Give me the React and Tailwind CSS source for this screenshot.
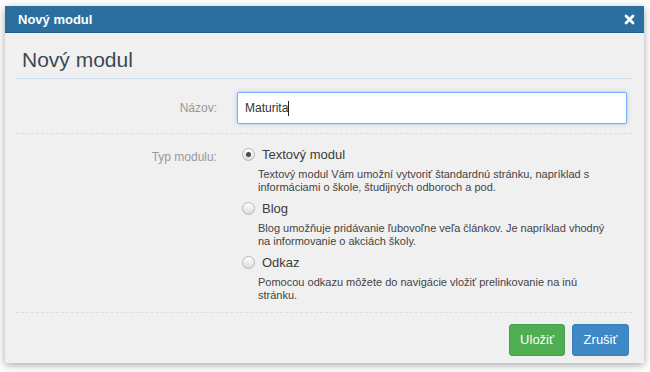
import React from "react";

function Radio({ checked }) {
  return (
    <div className="mt-[1.5px] w-[13px] h-[13px] shrink-0 rounded-full border border-[#b5b5b5] bg-[linear-gradient(#ffffff,#dcdcdc)] flex items-center justify-center">
      {checked && <div className="w-[5px] h-[5px] rounded-full bg-[#4a4a4a]" />}
    </div>
  );
}

function Option({ checked, label, desc }) {
  return (
    <div className="flex flex-col">
      <div className="flex items-start gap-[7px] h-[18px]">
        <Radio checked={checked} />
        <span className="text-[13px] leading-[18px] text-[#3c3c3c]">{label}</span>
      </div>
      <div className="mt-[4px] ml-[16px] w-[350px] text-[11px] leading-[13px] text-[#444]">{desc}</div>
    </div>
  );
}

export default function App() {
  return (
    <div
      className="w-[650px] h-[372px] bg-white pt-[6px] pl-[5px]"
      style={{ fontFamily: '"Liberation Sans", Arial, sans-serif' }}
    >
      <div className="w-[639px] h-[357px] bg-[#f0f0f0] shadow-[0_2px_8px_rgba(0,0,0,0.35)] flex flex-col">
        <div className="h-[27px] shrink-0 bg-[#2b6ea0] border-b border-[#1f5c8a] flex items-center justify-between pl-[13px] pr-[9px]">
          <span className="text-white font-bold text-[13px] leading-none">Nový modul</span>
          <svg width="11" height="11" viewBox="0 0 11 11">
            <path d="M2 2 L9 9 M9 2 L2 9" stroke="#fff" strokeWidth="2.8" strokeLinecap="round" />
          </svg>
        </div>
        <div className="mx-[11px] mr-[12px] flex flex-col">
          <div className="pt-[15px] pb-[6px] pl-[6px] border-b border-[#d0e0f2]">
            <h1 className="text-[21px] leading-[24px] text-[#3d4853]">Nový modul</h1>
          </div>
          <div className="pt-[13px] pb-[9px] flex items-center border-b border-dashed border-[#dcdcdc]">
            <div className="w-[201px] text-right text-[12px] text-[#999]">Názov:</div>
            <div className="ml-[20px] w-[390px] h-[32px] bg-white border border-[#77aef0] rounded-[2px] shadow-[0_0_4px_rgba(102,160,233,0.55)] flex items-center pl-[7px] text-[12px] text-[#333]">
              <span>Maturita</span>
              <span className="w-px h-[15px] bg-[#222]" />
            </div>
          </div>
          <div className="pt-[12px] pb-[10px] flex items-start border-b border-dashed border-[#dcdcdc]">
            <div className="w-[201px] text-right text-[12px] leading-[18px] mt-[2px] text-[#999]">Typ modulu:</div>
            <div className="ml-[25px] flex flex-col gap-[6px]">
              <Option
                checked
                label="Textový modul"
                desc={<>Textový modul Vám umožní vytvoriť štandardnú stránku, napríklad s<br />informáciami o škole, študijných odboroch a pod.</>}
              />
              <Option
                label="Blog"
                desc={<>Blog umožňuje pridávanie ľubovoľne veľa článkov. Je napríklad vhodný<br />na informovanie o akciách školy.</>}
              />
              <Option
                label="Odkaz"
                desc={<>Pomocou odkazu môžete do navigácie vložiť prelinkovanie na inú<br />stránku.</>}
              />
            </div>
          </div>
          <div className="pt-[11px] pr-[3px] flex justify-end gap-[7px]">
            <button className="w-[56px] h-[32px] rounded-[3px] bg-[#4fae52] border border-[#46a049] text-white text-[13px]">Uložiť</button>
            <button className="w-[57px] h-[32px] rounded-[3px] bg-[#3f88c6] border border-[#3a7fba] text-white text-[13px]">Zrušiť</button>
          </div>
        </div>
      </div>
    </div>
  );
}
